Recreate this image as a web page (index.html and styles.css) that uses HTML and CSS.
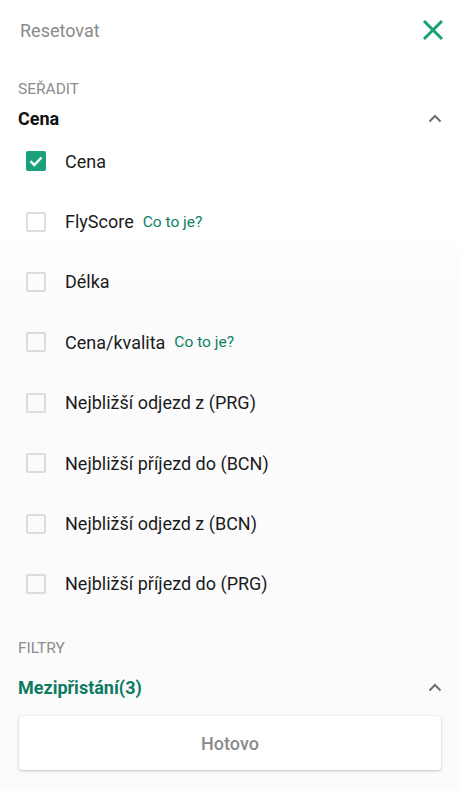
FILE: index.html
```html
<!DOCTYPE html>
<html lang="cs">
<head>
<meta charset="utf-8">
<link rel="stylesheet" href="styles.css">
</head>
<body>
<div class="screen">
  <header class="header">
    <span class="reset">Resetovat</span>
    <svg class="close" width="22" height="22" viewBox="0 0 22 22"><path d="M2 2 L20 20 M20 2 L2 20" stroke="#17a078" stroke-width="3" fill="none"/></svg>
  </header>

  <div class="section-label sort-label">SEŘADIT</div>
  <div class="group-head">
    <span class="group-title">Cena</span>
    <svg class="chev" width="14" height="9" viewBox="0 0 14 9"><path d="M1.5 7.5 L7 2 L12.5 7.5" stroke="#6e6e6e" stroke-width="2" fill="none"/></svg>
  </div>

  <ul class="options">
    <li class="option"><span class="box checked"><svg width="20" height="20" viewBox="0 0 20 20"><path d="M4.5 10.2 L8.3 14 L15.5 6.5" stroke="#fff" stroke-width="2.4" fill="none"/></svg></span><span class="label">Cena</span></li>
    <li class="option"><span class="box"></span><span class="label">FlyScore</span><span class="info">Co to je?</span></li>
    <li class="option"><span class="box"></span><span class="label">Délka</span></li>
    <li class="option"><span class="box"></span><span class="label">Cena/kvalita</span><span class="info">Co to je?</span></li>
    <li class="option"><span class="box"></span><span class="label">Nejbližší odjezd z (PRG)</span></li>
    <li class="option"><span class="box"></span><span class="label">Nejbližší příjezd do (BCN)</span></li>
    <li class="option"><span class="box"></span><span class="label">Nejbližší odjezd z (BCN)</span></li>
    <li class="option"><span class="box"></span><span class="label">Nejbližší příjezd do (PRG)</span></li>
  </ul>

  <div class="section-label filter-label">FILTRY</div>
  <div class="group-head filter-head">
    <span class="group-title teal">Mezipřistání(3)</span>
    <svg class="chev" width="14" height="9" viewBox="0 0 14 9"><path d="M1.5 7.5 L7 2 L12.5 7.5" stroke="#6e6e6e" stroke-width="2" fill="none"/></svg>
  </div>

  <button class="done">Hotovo</button>
</div>
</body>
</html>
```
FILE: styles.css
```css
* { box-sizing: border-box; }
html, body { margin: 0; padding: 0; }
body {
  width: 460px;
  height: 790px;
  background: #fcfcfd;
  font-family: Roboto, "Noto Sans", sans-serif;
  color: #1c1c1c;
  overflow: hidden;
}
.screen {
  background: linear-gradient(#ffffff 0px, #ffffff 230px, #fbfbfc 300px);
  height: 790px;
  display: flex;
  flex-direction: column;
}
.header {
  height: 60px;
  display: flex;
  align-items: center;
  justify-content: space-between;
  padding: 0 16px 0 20px;
}
.reset {
  font-size: 18px;
  color: #8a8a8a;
}
.section-label {
  font-size: 15.5px;
  line-height: 20px;
  color: #8c8c8c;
  padding-left: 18px;
}
.sort-label { margin-top: 19px; }
.group-head {
  height: 24px;
  margin-top: 7px;
  display: flex;
  align-items: center;
  justify-content: space-between;
  padding: 0 18px 0 18px;
}
.group-title {
  font-size: 18px;
  font-weight: 700;
  color: #111;
}
.group-title.teal { color: #0d7b63; }
.chev { display: block; }
.options {
  list-style: none;
  margin: 0;
  padding: 0;
  margin-top: 1px;
}
.option {
  height: 60.4px;
  display: flex;
  align-items: center;
  padding-left: 26px;
}
.box {
  width: 20px;
  height: 20px;
  border: 2px solid #dcdcdc;
  border-radius: 2px;
  margin-right: 19px;
  flex: none;
  position: relative;
}
.box.checked {
  background: #1aa07a;
  border: none;
}
.box svg { display: block; }
.label {
  font-size: 18px;
  color: #1c1c1c;
}
.info {
  font-size: 15.5px;
  color: #0f7e66;
  margin-left: 9px;
}
.filter-label { margin-top: 24px; }
.filter-head { margin-top: 17px; }
.done {
  margin: 17px 19px 0 19px;
  height: 54px;
  background: #ffffff;
  border: none;
  border-radius: 3px;
  box-shadow: 0 1px 3px rgba(0,0,0,0.22), 0 0 1px rgba(0,0,0,0.12);
  font-family: Roboto, "Noto Sans", sans-serif;
  font-size: 18px;
  font-weight: 500;
  color: #8a8a8a;
}
```
